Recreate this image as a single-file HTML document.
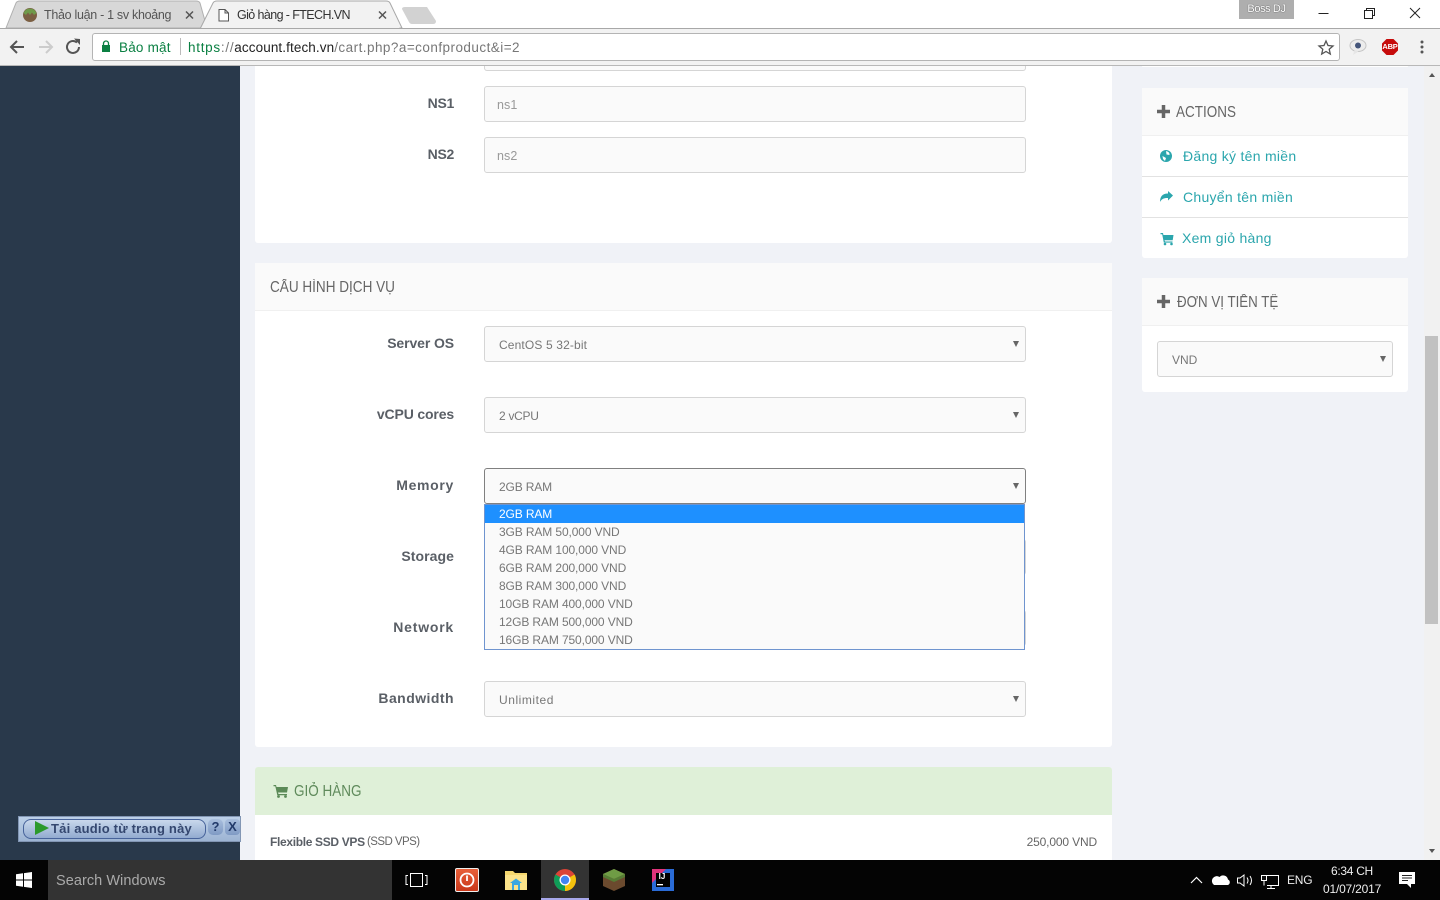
<!DOCTYPE html>
<html lang="vi"><head><meta charset="utf-8"><title>Giỏ hàng - FTECH.VN</title>
<style>
*{box-sizing:border-box}
html,body{margin:0;padding:0;width:1440px;height:900px;overflow:hidden;background:#f0f2f7;font-family:"Liberation Sans","Noto Sans CJK SC",sans-serif}
.a{position:absolute;white-space:nowrap}
.lab{position:absolute;right:986px;font-weight:700;font-size:14px;color:#5a5f66;line-height:18px;white-space:nowrap}
.sel,.inp{position:absolute;left:484px;width:542px;height:36px;background:#fafafa;border:1px solid #d5d5d5;border-radius:3px;font-size:12px;color:#777;line-height:36px;padding-left:14px;white-space:nowrap}
.inp{font-size:12.5px;padding-left:12px;color:#999;letter-spacing:.1px}
.sel:after{content:"";position:absolute;right:6px;top:14px;border-left:3.5px solid transparent;border-right:3.5px solid transparent;border-top:6px solid #666}
.card{position:absolute;background:#fff;border-radius:3px}
.head{position:absolute;left:0;right:0;top:0;background:#fafafa;border-bottom:1px solid #f0f0f0}
.h{position:absolute;font-size:15.5px;line-height:18px;color:#666;white-space:nowrap;transform:scaleX(.87);transform-origin:left center}
.lnk{position:absolute;left:1183px;font-size:14px;color:#2ba6ad;letter-spacing:.28px;line-height:18px;white-space:nowrap}
.opt{position:absolute;left:14px;font-size:12px;line-height:18px;color:#777;letter-spacing:-.12px;white-space:nowrap}
.hr{position:absolute;left:1142px;width:266px;height:1px;background:#e2e2e2}
</style></head><body>

<!-- page -->
<div class="a" style="left:0;top:66px;width:240px;height:794px;background:#29394b"></div>
<div class="a" style="left:240px;top:66px;width:1184px;height:794px;background:#f0f2f7"></div>

<!-- scrollbar -->
<div class="a" style="left:1424px;top:66px;width:16px;height:794px;background:#f1f1f1"></div>
<div class="a" style="left:1425px;top:336px;width:13px;height:288px;background:#c1c1c1"></div>
<div class="a" style="left:1429px;top:73px;border-left:3.5px solid transparent;border-right:3.5px solid transparent;border-bottom:4px solid #555"></div>
<div class="a" style="left:1429px;top:849px;border-left:3.5px solid transparent;border-right:3.5px solid transparent;border-top:4px solid #555"></div>

<!-- card 1 -->
<div class="card" style="left:255px;top:66px;width:857px;height:177px;border-radius:0 0 3px 3px"></div>
<div class="a" style="left:484px;top:66px;width:542px;height:5px;background:#fafafa;border:1px solid #d5d5d5;border-top:0;border-radius:0 0 3px 3px"></div>
<div class="lab" style="top:94px;letter-spacing:-.3px">NS1</div>
<div class="inp" style="top:86px">ns1</div>
<div class="lab" style="top:145px;letter-spacing:-.3px">NS2</div>
<div class="inp" style="top:137px">ns2</div>

<!-- card 2 -->
<div class="card" style="left:255px;top:263px;width:857px;height:484px"><div class="head" style="height:48px"></div></div>
<div class="h" style="left:270px;top:279px;transform:scaleX(.874)">CẤU HÌNH DỊCH VỤ</div>
<div class="lab" style="top:334px;letter-spacing:-.1px">Server OS</div>
<div class="sel" style="top:326px;letter-spacing:.14px">CentOS 5 32-bit</div>
<div class="lab" style="top:405px;letter-spacing:-.15px">vCPU cores</div>
<div class="sel" style="top:397px;letter-spacing:-.28px">2 vCPU</div>
<div class="lab" style="top:476px;letter-spacing:.68px">Memory</div>
<div class="lab" style="top:547px;letter-spacing:.07px">Storage</div>
<div class="sel" style="top:539px"></div>
<div class="lab" style="top:618px;letter-spacing:.78px">Network</div>
<div class="sel" style="top:610px"></div>
<div class="lab" style="top:689px;letter-spacing:.45px">Bandwidth</div>
<div class="sel" style="top:681px;letter-spacing:.55px">Unlimited</div>
<div class="sel" style="top:468px;border-color:#808080;letter-spacing:-.14px">2GB RAM</div>
<div class="a" style="left:484px;top:504px;width:541px;height:146px;background:#fafafa;border:1px solid #6f94cf">
  <div class="a" style="left:0;top:0;width:539px;height:18px;background:#1e90ff"></div>
  <div class="opt" style="top:0;color:#fff">2GB RAM</div>
  <div class="opt" style="top:18px">3GB RAM 50,000 VND</div>
  <div class="opt" style="top:36px">4GB RAM 100,000 VND</div>
  <div class="opt" style="top:54px">6GB RAM 200,000 VND</div>
  <div class="opt" style="top:72px">8GB RAM 300,000 VND</div>
  <div class="opt" style="top:90px">10GB RAM 400,000 VND</div>
  <div class="opt" style="top:108px">12GB RAM 500,000 VND</div>
  <div class="opt" style="top:126px">16GB RAM 750,000 VND</div>
</div>

<!-- cart -->
<div class="card" style="left:255px;top:767px;width:857px;height:93px;border-radius:3px 3px 0 0"></div>
<div class="a" style="left:255px;top:767px;width:857px;height:48px;background:#dff0d8;border-radius:3px 3px 0 0"></div>
<svg class="a" style="left:273px;top:784px" width="16" height="14"><path d="M.5 1 H3 L3.5 3 H15 L14 8.500 H5 L5.500 10 H14 V11.200 H4.300 L2.300 2.200 H.5 Z" fill="#5b8a57"/><circle cx="5.500" cy="12.500" r="1.400" fill="#5b8a57"/><circle cx="12.500" cy="12.500" r="1.400" fill="#5b8a57"/></svg>
<div class="h" style="left:294px;top:783px;color:#5f8a5b">GIỎ HÀNG</div>
<div class="a" style="left:270px;top:834px;font-size:12px;line-height:16px;color:#5a5f66;font-weight:700;letter-spacing:-.33px">Flexible SSD VPS</div>
<div class="a" style="left:367px;top:834px;font-size:11.500px;line-height:16px;color:#666;letter-spacing:-.55px">(SSD VPS)</div>
<div class="a" style="right:343px;top:834px;font-size:12px;line-height:16px;color:#666;letter-spacing:-.15px">250,000 VND</div>

<!-- side -->
<div class="card" style="left:1142px;top:66px;width:266px;height:1px"></div>
<div class="card" style="left:1142px;top:88px;width:266px;height:170px"><div class="head" style="height:48px"></div></div>
<div class="hr" style="top:176px"></div><div class="hr" style="top:217px"></div>
<svg class="a" style="left:1157px;top:105px" width="13" height="13"><path d="M6.500 0 V13 M0 6.500 H13" stroke="#666" stroke-width="3.500"/></svg>
<div class="h" style="left:1176px;top:104px">ACTIONS</div>
<svg class="a" style="left:1159px;top:149px" width="14" height="14"><circle cx="7" cy="7" r="6" fill="#2ba6ad"/><path d="M7 2 Q11 3 10.500 6 L7.500 5.500Z M3.500 7 L7 9 L6 12 L4 10Z" fill="#fff"/></svg>
<div class="lnk" style="top:147px">Đăng ký tên miền</div>
<svg class="a" style="left:1159px;top:190px" width="15" height="14"><path d="M14 5.500 L9 1 V3.500 C3 3.500 1 7 1 12 C2.500 9 5 7.800 9 8 V10.500 Z" fill="#2ba6ad"/></svg>
<div class="lnk" style="top:188px">Chuyển tên miền</div>
<svg class="a" style="left:1160px;top:232px" width="14" height="14"><path d="M.5 1 H3 L3.400 3 H13.500 L12.700 8.200 H4.500 L5 9.500 H12.500 V10.600 H3.800 L2.200 2.200 H.5 Z" fill="#2ba6ad"/><circle cx="5" cy="12" r="1.300" fill="#2ba6ad"/><circle cx="11.500" cy="12" r="1.300" fill="#2ba6ad"/></svg>
<div class="lnk" style="top:229px;left:1182px">Xem giỏ hàng</div>

<div class="card" style="left:1142px;top:278px;width:266px;height:114px"><div class="head" style="height:48px"></div></div>
<svg class="a" style="left:1157px;top:295px" width="13" height="13"><path d="M6.500 0 V13 M0 6.500 H13" stroke="#666" stroke-width="3.500"/></svg>
<div class="h" style="left:1177px;top:294px;transform:scaleX(.86)">ĐƠN VỊ TIỀN TỆ</div>
<div class="sel" style="left:1157px;top:341px;width:236px;padding-left:14px">VND</div>

<!-- chrome -->
<div class="a" style="left:0;top:0;width:1440px;height:28px;background:#fff"></div>
<svg class="a" style="left:0;top:0" width="470" height="30">
<path d="M6 28 L16 3 Q17 1 20 1 H196 Q199 1 200 3 L207 28 Z" fill="#d8d8d8" stroke="#b0b0b0"/>
<path d="M200 29 L213 3 Q214 1 217 1 H386 Q389 1 390 3 L402 28 H400 V29 Z" fill="#f2f2f2" stroke="#a8a8a8"/>
<path d="M402 9 Q402 7 405 7 H427 L436 21 Q436 24 433 24 H412 Q410 24 409 22 Z" fill="#d2d2d2"/>
<circle cx="30" cy="15" r="7" fill="#7b5f43"/><path d="M23.500 13 A7 7 0 0 1 36.500 13 L34 15 L32 12.500 L30 15 L28 12.500 L26 15 Z" fill="#6f9a4a"/>
<path d="M219 9.500 H225 L228.500 13 V21 H219 Z M225 9.500 V13 H228.500" fill="#fff" stroke="#555" stroke-width="1"/>
<path d="M186 11.500 L193 18.500 M193 11.500 L186 18.500 M379 11.500 L386 18.500 M386 11.500 L379 18.500" stroke="#555" stroke-width="1.500"/>
</svg>
<div class="a" style="left:44px;top:7px;width:127px;overflow:hidden;font-size:12.500px;line-height:16px;color:#555;letter-spacing:-.3px">Thảo luận - 1 sv khoảng</div>
<div class="a" style="left:237px;top:7px;font-size:12.500px;line-height:16px;color:#333;letter-spacing:-.6px">Giỏ hàng - FTECH.VN</div>
<div class="a" style="left:1239px;top:0;width:55px;height:19px;background:#aeaeae;color:#fff;font-size:11px;line-height:19px;text-align:center;text-shadow:0 0 1px #222;letter-spacing:-.4px">Boss DJ</div>
<svg class="a" style="left:1309px;top:0" width="120" height="28"><path d="M9.500 13.500 H19.500" stroke="#222"/><path d="M55.500 10.500 H63.500 V18.500 H55.500 Z M57.500 10 V8.500 H65.500 V15.500 H63.500" fill="none" stroke="#222"/><path d="M101 8 L111 18 M111 8 L101 18" stroke="#222"/></svg>
<div class="a" style="left:0;top:28px;width:1440px;height:38px;background:#f2f2f2;border-top:1px solid #a8a8a8;border-bottom:1px solid #b8b8b8"></div>
<svg class="a" style="left:0;top:30px" width="90" height="34">
<path d="M24 17 H12 M17 11 L11 17 L17 23" fill="none" stroke="#555" stroke-width="2"/>
<path d="M39 17 H51 M46 11 L52 17 L46 23" fill="none" stroke="#ccc" stroke-width="2"/>
<path d="M79 17 A6 6 0 1 1 77 12.500" fill="none" stroke="#555" stroke-width="2"/><path d="M74 8.500 L80 9 V15 Z" fill="#555"/>
</svg>
<div class="a" style="left:92px;top:33px;width:1248px;height:28px;background:#fff;border:1px solid #b4b4b4;border-radius:3px"></div>
<svg class="a" style="left:100px;top:40px" width="12" height="14"><rect x="2" y="5" width="8" height="7" fill="#0b8043"/><path d="M3.500 5 V3.500 A2.500 2.500 0 0 1 8.500 3.500 V5" fill="none" stroke="#0b8043" stroke-width="1.300"/></svg>
<div class="a" style="left:119px;top:40px;font-size:13.500px;line-height:16px;color:#0b8043;letter-spacing:.2px">Bảo mật</div>
<div class="a" style="left:180px;top:38px;width:1px;height:17px;background:#bbb"></div>
<div class="a" style="left:188px;top:40px;font-size:13.500px;line-height:16px;color:#777;letter-spacing:.46px"><span style="letter-spacing:.72px"><span style="color:#0b8043">https</span>://</span><span style="color:#222;letter-spacing:.1px">account.ftech.vn</span>/cart.php?a=confproduct&amp;i=2</div>
<svg class="a" style="left:1316px;top:38px" width="120" height="18">
<path d="M10 3 L12 7.500 L17 8 L13.200 11.200 L14.300 16 L10 13.500 L5.700 16 L6.800 11.200 L3 8 L8 7.500 Z" fill="none" stroke="#555" stroke-width="1.300"/>
<ellipse cx="42" cy="7.500" rx="8" ry="6" fill="#ececec" stroke="#c4c4c4"/><circle cx="42" cy="7.500" r="3" fill="#44557a"/><path d="M38.500 12 L37 17 L42.500 13.500Z" fill="#e6e6e6"/>
<path d="M70.500 1 H77.500 L82 5.500 V12.500 L77.500 17 H70.500 L66 12.500 V5.500 Z" fill="#c60c0c"/>
<circle cx="106" cy="4" r="1.500" fill="#555"/><circle cx="106" cy="9" r="1.500" fill="#555"/><circle cx="106" cy="14" r="1.500" fill="#555"/>
</svg>
<div class="a" style="left:1382px;top:42px;width:16px;text-align:center;font-size:7.500px;font-weight:700;color:#fff;line-height:10px;letter-spacing:-.2px">ABP</div>

<!-- audio bar -->
<div class="a" style="left:18px;top:816px;width:223px;height:26px;background:linear-gradient(#bcd0e8,#9db4d3);border:1px solid #8296b4"></div>
<div class="a" style="left:23px;top:819px;width:183px;height:20px;background:linear-gradient(#c9d8ec,#92abd0);border:1px solid #47639a;border-radius:8px"></div>
<svg class="a" style="left:33px;top:820px" width="18" height="16"><path d="M2 1 L16 8 L2 15 Z" fill="#2c9a2c"/></svg>
<div class="a" style="left:51px;top:821px;font-size:13px;line-height:16px;font-weight:700;color:#34476f;letter-spacing:.2px">Tải audio từ trang này</div>
<div class="a" style="left:208px;top:819px;width:15px;height:16px;background:linear-gradient(#a8bedd,#7f9ac4);border-radius:5px;font-size:13px;font-weight:700;color:#223a6a;text-align:center;line-height:16px">?</div>
<div class="a" style="left:225px;top:819px;width:15px;height:16px;background:linear-gradient(#a8bedd,#7f9ac4);border-radius:4px;font-size:13px;font-weight:700;color:#223a6a;text-align:center;line-height:16px">X</div>

<!-- taskbar -->
<div class="a" style="left:0;top:860px;width:1440px;height:40px;background:#040404"></div>
<svg class="a" style="left:16px;top:872px" width="18" height="16"><path d="M0 2.300 L7 1.300 V7.500 H0 Z M8 1.100 L16 0 V7.500 H8 Z M0 8.500 H7 V14.700 L0 13.700 Z M8 8.500 H16 V16 L8 14.900 Z" fill="#fff"/></svg>
<div class="a" style="left:48px;top:860px;width:344px;height:40px;background:#333"></div>
<div class="a" style="left:56px;top:872px;font-size:14.500px;line-height:18px;color:#aaa;letter-spacing:.05px">Search Windows</div>
<svg class="a" style="left:405px;top:872px" width="24" height="16"><rect x="5.500" y="1.500" width="12" height="13" fill="none" stroke="#fff"/><path d="M3 3.500 H1 V12.500 H3 M20 3.500 H22 V12.500 H20" fill="none" stroke="#fff"/></svg>
<div class="a" style="left:455px;top:868px;width:24px;height:24px;background:linear-gradient(#e8603a,#c9381a);border:1px solid #eee;border-radius:2px"></div>
<svg class="a" style="left:458px;top:871px" width="18" height="18"><circle cx="9" cy="9" r="6.500" fill="none" stroke="#fff" stroke-width="1.800"/><path d="M9 4.500 V10" stroke="#fff" stroke-width="1.800"/></svg>
<svg class="a" style="left:504px;top:870px" width="24" height="20"><path d="M1 1 H9 L11 3 H23 V20 H1 Z" fill="#f5d76e"/><rect x="1" y="5" width="22" height="15" fill="#fce38a"/><path d="M8 20 V13 H6 L12 8.500 L18 13 H16 V20 H14 V15 H10 V20 Z" fill="#3aa7e0"/></svg>
<div class="a" style="left:541px;top:860px;width:48px;height:40px;background:#333;border-bottom:2px solid #a8a8ea"></div>
<svg class="a" style="left:553px;top:868px" width="24" height="24"><circle cx="12" cy="12" r="11" fill="#db4437"/><path d="M12 12 L2.500 6.500 A11 11 0 0 0 12 23 Z" fill="#0f9d58"/><path d="M12 12 L12 23 A11 11 0 0 0 21.500 6.500 Z" fill="#f4c20d"/><circle cx="12" cy="12" r="5.500" fill="#fff"/><circle cx="12" cy="12" r="4.200" fill="#4285f4"/></svg>
<svg class="a" style="left:602px;top:868px" width="24" height="24"><path d="M12 1 L23 6 V18 L12 23 L1 18 V6 Z" fill="#6b4a2e"/><path d="M12 1 L23 6 L12 11 L1 6 Z" fill="#6f9c45"/><path d="M1 6 L12 11 V14 L1 9 Z M23 6 L12 11 V14 L23 9 Z" fill="#567d35"/></svg>
<svg class="a" style="left:652px;top:869px" width="22" height="22"><rect width="22" height="22" fill="#2a6bd6"/><path d="M0 0 H14 L0 14 Z" fill="#e0337b"/><rect x="4" y="4" width="14" height="14" fill="#000"/><rect x="5" y="15" width="6" height="1.300" fill="#fff"/></svg>
<div class="a" style="left:655px;top:872px;width:14px;font-size:8px;font-weight:700;line-height:9px;color:#fff;text-align:center">IJ</div>

<svg class="a" style="left:1188px;top:870px" width="120" height="20">
<path d="M3 13 L8.500 7.500 L14 13" fill="none" stroke="#fff" stroke-width="1.200"/>
<path d="M26 15 H40 A3 3 0 0 0 40 9.500 A5 5 0 0 0 31.500 7 A4 4 0 0 0 26 15 Z" fill="#fff"/>
<path d="M49.500 8 H52 L56 5 V16 L52 13 H49.500 Z M59 7.500 Q61 10.500 59 13.500 M62 6 Q65 10.500 62 15" fill="none" stroke="#fff"/>
<path d="M74.500 5.500 H90.500 V15.500 H79 M76 15.500 V11 M83 15.500 V18.500 M79 18.500 H87" fill="none" stroke="#fff"/><rect x="73.500" y="5.500" width="5" height="5" fill="#111" stroke="#fff"/>
</svg>
<div class="a" style="left:1287px;top:872px;font-size:12px;line-height:16px;color:#eee;letter-spacing:-.2px">ENG</div>
<div class="a" style="left:1331px;top:863px;font-size:12px;line-height:16px;color:#eee;letter-spacing:-.3px">6:34 CH</div>
<div class="a" style="left:1323px;top:881px;font-size:12px;line-height:16px;color:#eee;letter-spacing:-.2px">01/07/2017</div>
<svg class="a" style="left:1398px;top:871px" width="20" height="18"><path d="M1 1 H17 V13 H13 V17 L9 13 H1 Z" fill="#fff"/><path d="M4 4.500 H14 M4 7 H14 M4 9.500 H10" stroke="#222"/></svg>
</body></html>
